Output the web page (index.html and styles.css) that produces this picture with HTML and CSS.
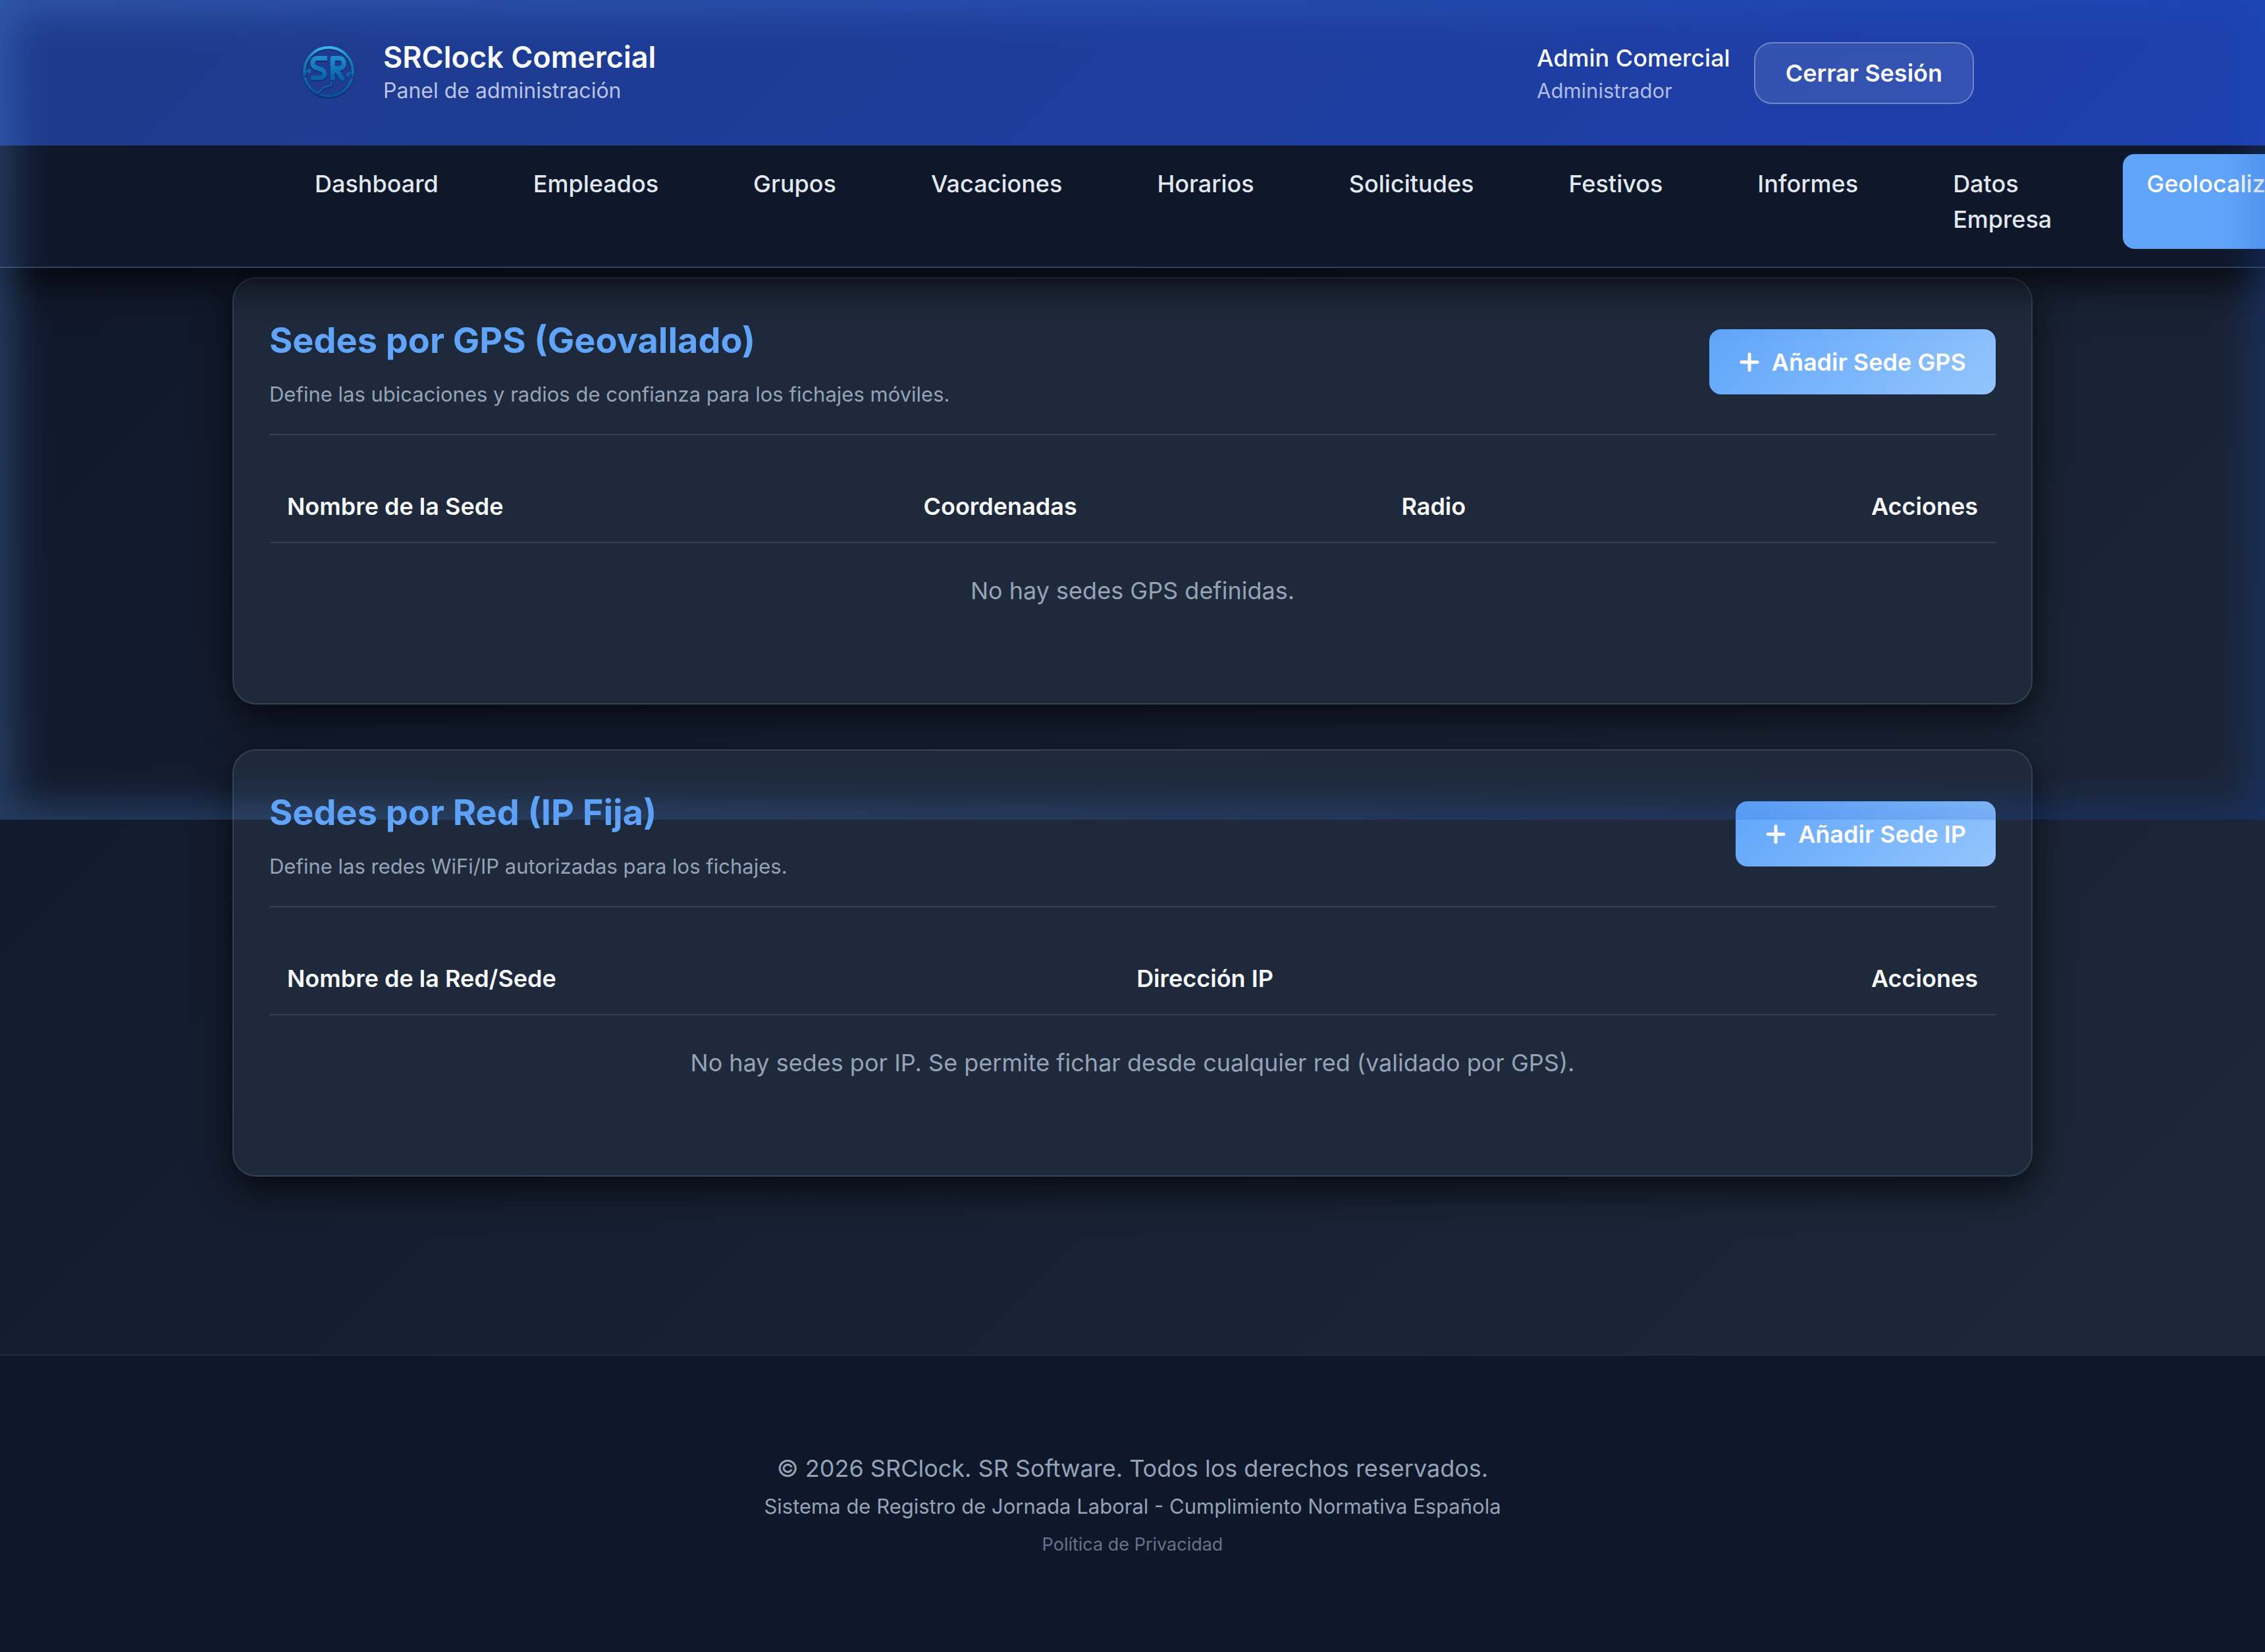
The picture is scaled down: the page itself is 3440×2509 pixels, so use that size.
FILE: index.html
```html
<!DOCTYPE html>
<html lang="es">
<head>
<meta charset="utf-8">
<meta name="viewport" content="width=device-width, initial-scale=1">
<title>SRClock Comercial - Geolocalización</title>
<link rel="stylesheet" href="styles.css">
</head>
<body>
<div class="glow" aria-hidden="true"></div>
<div class="topbar">
  <header class="header">
    <div class="header-inner">
      <div class="brand">
        <svg class="logo" viewBox="0 0 80 80" aria-hidden="true">
          <defs>
            <linearGradient id="metal" x1="0" y1="0" x2="0" y2="1">
              <stop offset="0" stop-color="#3cb4f0"/>
              <stop offset="0.2" stop-color="#1a80c0"/>
              <stop offset="1" stop-color="#07529a"/>
            </linearGradient>
            <linearGradient id="letters" gradientUnits="userSpaceOnUse" x1="0" y1="16" x2="0" y2="56">
              <stop offset="0" stop-color="#1f90d0"/>
              <stop offset="1" stop-color="#0659a2"/>
            </linearGradient>
          </defs>
          <g fill="none" stroke-linejoin="round">
            <circle cx="40" cy="41" r="36" stroke="#0b2a63" stroke-width="5"/>
            <circle cx="40" cy="40" r="36" stroke="url(#metal)" stroke-width="4"/>
            <g stroke-linecap="round">
              <path d="M5 46c0-4 3-8 7-7M75 48c1-5-4-8-7-4M44 54v5c0 3-2 4-6 4-5 0-6 2-13 9" stroke="#0b2a63" stroke-width="3"/>
              <path d="M5 45c0-4 3-8 7-7M75 47c1-5-4-8-7-4M44 52v6c0 3-2 4-6 4-5 0-6 2-13 9" stroke="#1268b0" stroke-width="2"/>
            </g>
            <circle cx="11" cy="39" r="3" fill="#1268b0"/><circle cx="69" cy="44" r="3" fill="#0f60a8"/>
            <g stroke="#0c2c68" stroke-width="8">
              <path d="M38 21H24c-9 0-10 11-3 14l9 3c7 3 5 12-2 12H14"/>
              <path d="M46 54V21h10c9 0 9 15 0 15h-6l12 18"/>
            </g>
            <g stroke="url(#letters)" stroke-width="7">
              <path d="M38 20H24c-9 0-10 11-3 14l9 3c7 3 5 12-2 12H14"/>
              <path d="M46 53V20h10c9 0 9 15 0 15h-6l12 18"/>
            </g>
          </g>
        </svg>
        <div>
          <h1 class="brand-title">SRClock Comercial</h1>
          <p class="brand-sub">Panel de administración</p>
        </div>
      </div>
      <div class="account">
        <div>
          <p class="account-name">Admin Comercial</p>
          <p class="account-role">Administrador</p>
        </div>
        <button class="logout" type="button">Cerrar Sesión</button>
      </div>
    </div>
  </header>
  <nav class="nav" aria-label="Principal">
    <ul class="nav-list">
      <li><a class="nav-link" href="#">Dashboard</a></li>
      <li><a class="nav-link" href="#">Empleados</a></li>
      <li><a class="nav-link" href="#">Grupos</a></li>
      <li><a class="nav-link" href="#">Vacaciones</a></li>
      <li><a class="nav-link" href="#">Horarios</a></li>
      <li><a class="nav-link" href="#">Solicitudes</a></li>
      <li><a class="nav-link" href="#">Festivos</a></li>
      <li><a class="nav-link" href="#">Informes</a></li>
      <li><a class="nav-link" href="#">Datos Empresa</a></li>
      <li><a class="nav-link active" href="#" aria-current="page">Geolocalización</a></li>
    </ul>
  </nav>
</div>
<main class="main">
  <section class="card">
    <div class="card-head">
      <div>
        <h2 class="card-title">Sedes por GPS (Geovallado)</h2>
        <p class="card-sub">Define las ubicaciones y radios de confianza para los fichajes móviles.</p>
      </div>
      <button class="add" type="button"><svg class="plus" viewBox="0 0 32 32" aria-hidden="true"><path d="M16 4v24M4 16h24"/></svg>Añadir Sede GPS</button>
    </div>
    <table class="table">
      <thead><tr><th>Nombre de la Sede</th><th>Coordenadas</th><th>Radio</th><th class="end">Acciones</th></tr></thead>
      <tbody><tr><td colspan="4">No hay sedes GPS definidas.</td></tr></tbody>
    </table>
  </section>
  <section class="card">
    <div class="card-head">
      <div>
        <h2 class="card-title">Sedes por Red (IP Fija)</h2>
        <p class="card-sub">Define las redes WiFi/IP autorizadas para los fichajes.</p>
      </div>
      <button class="add" type="button"><svg class="plus" viewBox="0 0 32 32" aria-hidden="true"><path d="M16 4v24M4 16h24"/></svg>Añadir Sede IP</button>
    </div>
    <table class="table">
      <thead><tr><th>Nombre de la Red/Sede</th><th>Dirección IP</th><th class="end">Acciones</th></tr></thead>
      <tbody><tr><td colspan="3">No hay sedes por IP. Se permite fichar desde cualquier red (validado por GPS).</td></tr></tbody>
    </table>
  </section>
</main>
<footer class="footer">
  <p>© 2026 SRClock. SR Software. Todos los derechos reservados.</p>
  <p class="footer-sub">Sistema de Registro de Jornada Laboral - Cumplimiento Normativa Española</p>
  <a class="footer-link" href="#">Política de Privacidad</a>
</footer>
</body>
</html>
```

FILE: styles.css
```css
*, *::before, *::after { box-sizing: border-box; }

html { overflow-x: hidden; }

body {
  margin: 0;
  position: relative;
  min-height: 100vh;
  display: flex;
  flex-direction: column;
  overflow-x: hidden;
  font-family: Inter, "Liberation Sans", sans-serif;
  font-size: 36px;
  line-height: 54px;
  color: #f8fafc;
  background: linear-gradient(135deg, #0f172a 0%, #1e293b 100%);
}

h1, h2, p, ul { margin: 0; padding: 0; }
ul { list-style: none; }
a { text-decoration: none; color: inherit; }
button { font: inherit; color: inherit; cursor: pointer; }

/* Coloured light around the edges of the first screen */
.glow {
  --edge: rgba(0, 0, 0, 0.8), rgba(0, 0, 0, 0.56) 20px, rgba(0, 0, 0, 0.26) 40px, rgba(0, 0, 0, 0.08) 60px, transparent 84px;
  position: absolute;
  inset: 0 0 auto 0;
  height: 1245px;
  z-index: 20;
  pointer-events: none;
  opacity: 0.25;
  background: linear-gradient(100deg, #60a5fa 0%, #3b7ae0 50%, #1550c8 100%);
  mask-image:
    linear-gradient(to right, var(--edge)),
    linear-gradient(to left, var(--edge)),
    linear-gradient(to bottom, var(--edge)),
    linear-gradient(to top, var(--edge));
}

.topbar {
  position: relative;
  z-index: 10;
  box-shadow: 0 20px 60px rgba(0, 0, 0, 0.8);
}

.header {
  padding: 54px 0;
  background: linear-gradient(135deg, #1e3a8a 0%, #1e40af 100%);
}

.header-inner {
  max-width: 2736px;
  min-height: 113px;
  margin: 0 auto;
  padding: 0 90px;
  display: flex;
  justify-content: space-between;
  align-items: center;
}

.brand, .account { display: flex; align-items: center; }
.brand { gap: 38px; padding: 0 0 4px 12px; }
.account { gap: 36px; }

.logo { width: 90px; height: 90px; padding: 4px; }

.brand-title { font-size: 45px; line-height: 58px; font-weight: 600; }
.brand-sub { font-size: 32px; line-height: 44px; color: #bbc4e4; }
.account-name { line-height: 54px; font-weight: 500; }
.account-role { font-size: 31px; line-height: 46px; color: #b1bde5; }

.logout {
  height: 94px;
  padding: 0 46px;
  border: 2px solid rgba(255, 255, 255, 0.3);
  border-radius: 27px;
  background: rgba(255, 255, 255, 0.1);
  font-weight: 600;
}

.nav {
  background: #0f172a;
  border-bottom: 2px solid #334155;
}

.nav-list {
  max-width: 2736px;
  margin: 0 auto;
  padding: 13px 90px 27px;
  display: flex;
  gap: 72px;
}

.nav-list li { display: flex; }

.nav-link {
  padding: 18px 36px;
  border-radius: 18px;
  font-weight: 500;
  color: #e2e8f0;
}

.nav-link.active { background: #60a5fa; color: #fff; }

.main {
  width: 100%;
  max-width: 2734px;
  margin: 0 auto;
  padding: 14px 0 270px;
  flex: 1;
  display: flex;
  flex-direction: column;
  gap: 68px;
}

.card {
  padding: 53px 54px 99px;
  border: 2px solid #334155;
  border-radius: 36px;
  background: #1e293b;
  box-shadow: 0 20px 56px rgba(0, 0, 0, 0.7);
}

.card-head {
  display: flex;
  justify-content: space-between;
  align-items: center;
  padding-bottom: 36px;
  margin-bottom: 54px;
  border-bottom: 2px solid #334155;
}

.card-title { font-size: 54px; line-height: 81px; font-weight: 700; color: #60a5fa; }
.card-sub { margin-top: 18px; font-size: 31px; line-height: 48px; color: #94a3b8; }

.add {
  display: flex;
  align-items: center;
  gap: 18px;
  height: 99px;
  padding: 0 45px;
  border: 0;
  border-radius: 18px;
  background: linear-gradient(135deg, #60a5fa, #93c5fd);
  font-weight: 600;
  color: #fff;
}

.plus { width: 32px; height: 32px; fill: none; stroke: #fff; stroke-width: 5; stroke-linecap: round; }

.table { width: 100%; border-collapse: collapse; }
.table th { padding: 27px; font-weight: 600; text-align: left; border-bottom: 2px solid #334155; }
.table th.end { text-align: right; }
.table td { padding: 45px 27px; text-align: center; color: #94a3b8; }

.footer {
  padding: 144px 36px 140px;
  border-top: 2px solid #1e293b;
  background: #0f172a;
  text-align: center;
  color: #94a3b8;
}

.footer-sub { margin-top: 4px; font-size: 31px; }
.footer-link { font-size: 27px; color: #64748b; }
```
